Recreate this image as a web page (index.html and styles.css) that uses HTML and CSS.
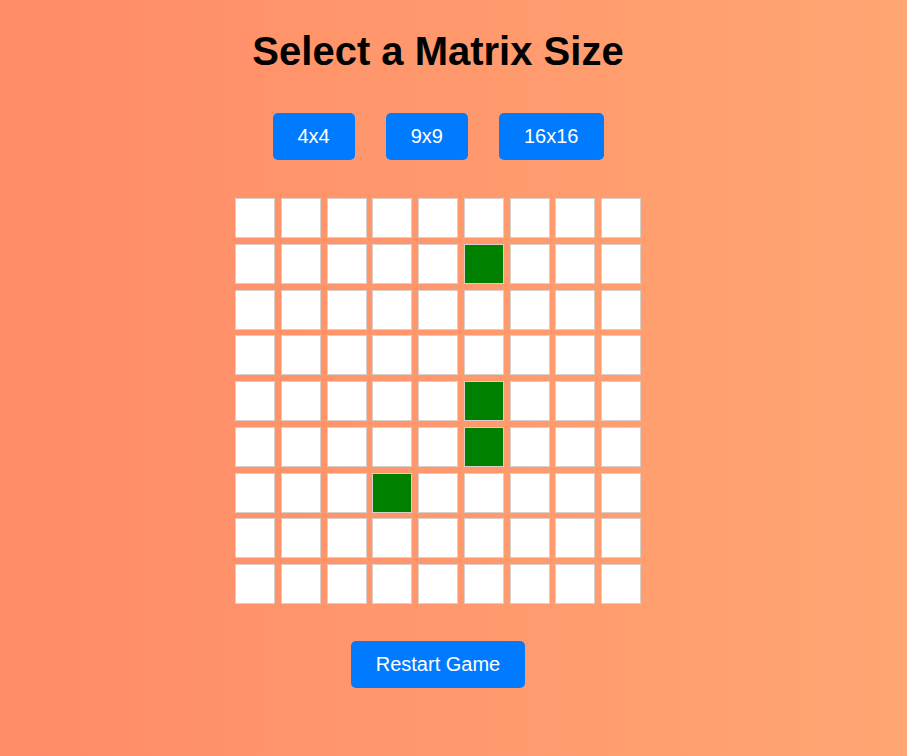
FILE: index.html
```html
<!DOCTYPE html>
<html lang="en">
<head>
<meta charset="utf-8">
<title>Matrix Game</title>
<link rel="stylesheet" href="styles.css">
</head>
<body>
<main class="app">
  <h1 class="title">Select a Matrix Size</h1>
  <div class="sizes">
    <button class="btn">4x4</button>
    <button class="btn">9x9</button>
    <button class="btn">16x16</button>
  </div>
  <div class="grid">
    <div class="cell"></div><div class="cell"></div><div class="cell"></div><div class="cell"></div><div class="cell"></div><div class="cell"></div><div class="cell"></div><div class="cell"></div><div class="cell"></div>
    <div class="cell"></div><div class="cell"></div><div class="cell"></div><div class="cell"></div><div class="cell"></div><div class="cell on"></div><div class="cell"></div><div class="cell"></div><div class="cell"></div>
    <div class="cell"></div><div class="cell"></div><div class="cell"></div><div class="cell"></div><div class="cell"></div><div class="cell"></div><div class="cell"></div><div class="cell"></div><div class="cell"></div>
    <div class="cell"></div><div class="cell"></div><div class="cell"></div><div class="cell"></div><div class="cell"></div><div class="cell"></div><div class="cell"></div><div class="cell"></div><div class="cell"></div>
    <div class="cell"></div><div class="cell"></div><div class="cell"></div><div class="cell"></div><div class="cell"></div><div class="cell on"></div><div class="cell"></div><div class="cell"></div><div class="cell"></div>
    <div class="cell"></div><div class="cell"></div><div class="cell"></div><div class="cell"></div><div class="cell"></div><div class="cell on"></div><div class="cell"></div><div class="cell"></div><div class="cell"></div>
    <div class="cell"></div><div class="cell"></div><div class="cell"></div><div class="cell on"></div><div class="cell"></div><div class="cell"></div><div class="cell"></div><div class="cell"></div><div class="cell"></div>
    <div class="cell"></div><div class="cell"></div><div class="cell"></div><div class="cell"></div><div class="cell"></div><div class="cell"></div><div class="cell"></div><div class="cell"></div><div class="cell"></div>
    <div class="cell"></div><div class="cell"></div><div class="cell"></div><div class="cell"></div><div class="cell"></div><div class="cell"></div><div class="cell"></div><div class="cell"></div><div class="cell"></div>
  </div>
  <button class="btn restart">Restart Game</button>
</main>
</body>
</html>
```

FILE: styles.css
```css
html, body {
  margin: 0;
  padding: 0;
}
body {
  min-height: 100vh;
  background: linear-gradient(to right, #ff8b67, #ffa673);
  font-family: "Liberation Sans", Arial, sans-serif;
}
.app {
  width: 876px;
  display: flex;
  flex-direction: column;
  align-items: center;
  padding-top: 28px;
}
.title {
  margin: 0;
  font-size: 40px;
  line-height: 46px;
  font-weight: bold;
  color: #000;
}
.sizes {
  display: flex;
  gap: 31px;
  margin-top: 39px;
}
.btn {
  background: #007bff;
  color: #fff;
  border: none;
  border-radius: 5px;
  padding: 12px 25px;
  font-family: "Liberation Sans", Arial, sans-serif;
  font-size: 20px;
  line-height: 23px;
  cursor: pointer;
}
.grid {
  display: grid;
  grid-template-columns: repeat(9, 40px);
  grid-auto-rows: 40px;
  gap: 5.75px;
  margin-top: 38px;
}
.cell {
  box-sizing: border-box;
  background: #fff;
  border: 1px solid #d9cfc8;
}
.cell.on {
  background: #008000;
}
.restart {
  margin-top: 37px;
}
```
